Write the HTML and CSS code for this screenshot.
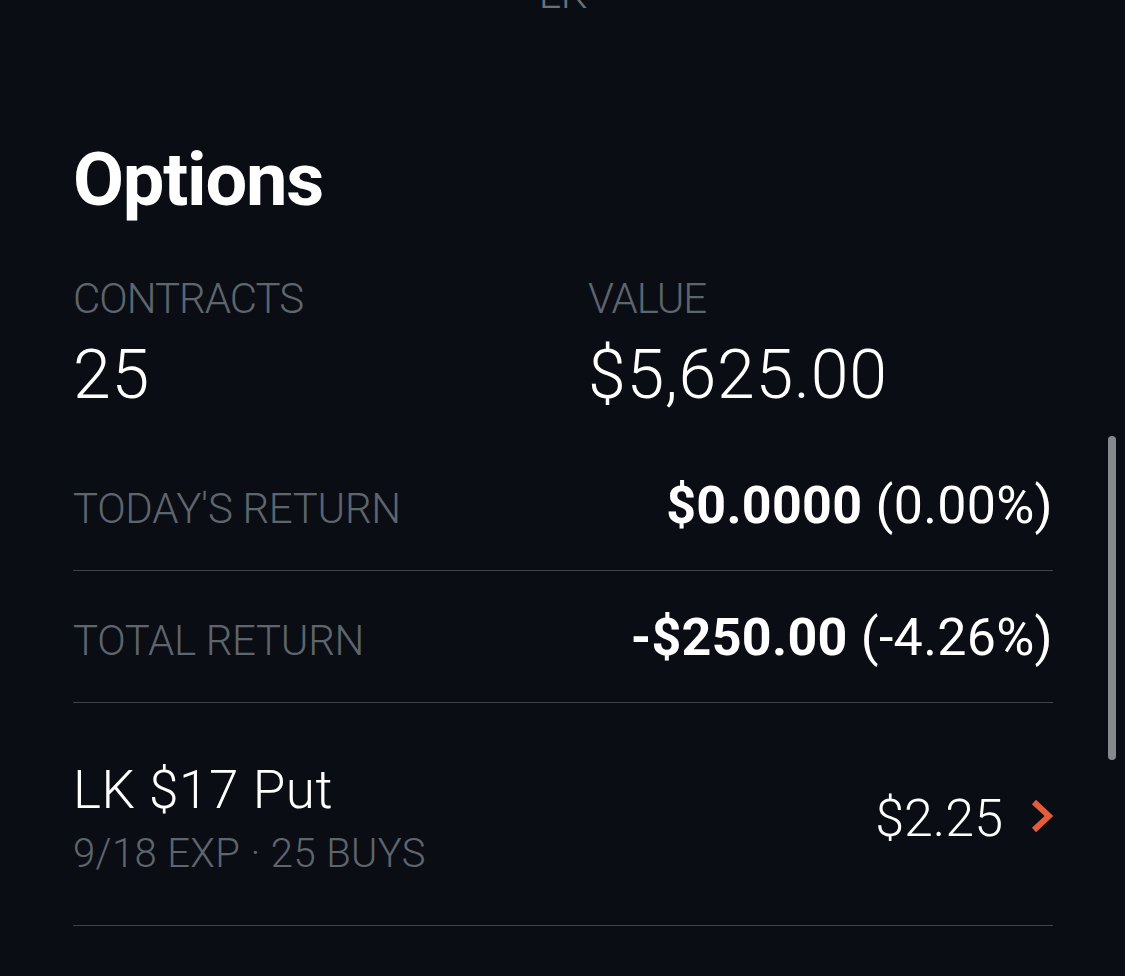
FILE: index.html
```html
<!DOCTYPE html>
<html lang="en">
<head>
  <meta charset="UTF-8" />
  <meta name="viewport" content="width=device-width, initial-scale=1.0"/>
  <title>LK Options</title>
  <link rel="stylesheet" href="styles.css">
</head>
<body>

<div class="page">
  <div class="top-title">LK</div>

  <h1 class="section-title">Options</h1>

  <div class="stats">
    <div class="stat">
      <div class="label">CONTRACTS</div>
      <div class="stat-value">25</div>
    </div>
    <div class="stat">
      <div class="label">VALUE</div>
      <div class="stat-value">$5,625.00</div>
    </div>
  </div>

  <div class="returns">
    <div class="return-row">
      <span class="label">TODAY'S RETURN</span>
      <span class="return-value"><strong>$0.0000</strong> (0.00%)</span>
    </div>
    <div class="return-row">
      <span class="label">TOTAL RETURN</span>
      <span class="return-value"><strong>-$250.00</strong> (-4.26%)</span>
    </div>
  </div>

  <div class="position">
    <div class="position-info">
      <div class="position-name">LK $17 Put</div>
      <div class="position-meta">9/18 EXP · 25 BUYS</div>
    </div>
    <div class="position-price">
      <span>$2.25</span>
      <svg class="chevron" width="22" height="34" viewBox="0 0 22 34">
        <path d="M3 3 L18 17 L3 31" fill="none" stroke="#e55d38" stroke-width="6"/>
      </svg>
    </div>
  </div>
</div>

<div class="scrollbar"></div>

</body>
</html>
```

FILE: styles.css
```css
body { margin: 0; background: #0a0e14; color: #ffffff; font-family: Roboto, "Liberation Sans", sans-serif; font-weight: 300; overflow: hidden; }
.page { padding: 0 72px 0 73px; }
.top-title { margin-top: -27px; font-size: 42px; line-height: 42px; text-align: center; color: #6c7178; }
.section-title { margin: 125px 0 0; font-size: 74px; line-height: 80px; font-weight: 700; letter-spacing: -1.2px; }
.label { font-size: 42px; line-height: 48px; color: #5f656d; letter-spacing: -0.3px; }
.stats { display: grid; grid-template-columns: 1fr 1fr; gap: 50px; margin-top: 55px; }
.stats .label { letter-spacing: -1px; }
.stat-value { margin-top: 16px; font-size: 68px; line-height: 72px; letter-spacing: 0.7px; }
.returns { margin-top: 28px; }
.return-row { display: flex; justify-content: space-between; align-items: baseline; padding: 46px 0 37px; border-bottom: 1px solid #3f444b; }
.return-value { font-size: 52px; line-height: 40px; font-weight: 400; letter-spacing: 0.3px; }
.return-value strong { font-weight: 700; }
.position { display: flex; justify-content: space-between; align-items: center; padding: 57px 0 47px; border-bottom: 1px solid #3f444b; }
.position-name { font-size: 53px; line-height: 60px; letter-spacing: 0.6px; }
.position-meta { margin-top: 10px; font-size: 40px; line-height: 48px; color: #5f656d; letter-spacing: 0.4px; }
.position-price { display: flex; align-items: center; gap: 28px; font-size: 52px; line-height: 60px; }
.chevron { display: block; margin-top: -6px; }
.scrollbar { position: absolute; top: 436px; right: 9px; width: 8px; height: 324px; border-radius: 4px; background: #85898e; }
```
